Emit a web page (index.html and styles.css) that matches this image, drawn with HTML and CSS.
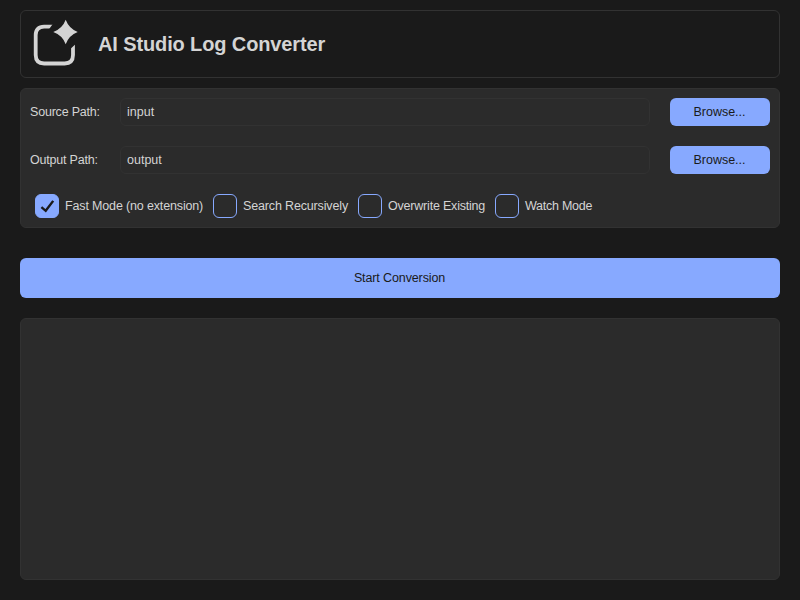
FILE: index.html
```html
<!DOCTYPE html>
<html lang="en">
<head>
<meta charset="utf-8">
<title>AI Studio Log Converter</title>
<link rel="stylesheet" href="styles.css">
</head>
<body>
<main class="app">
  <header class="header">
    <svg class="logo" width="48" height="48" viewBox="0 0 48 48" aria-hidden="true">
      <path class="logo-frame" d="M22 7.7H13.1Q4.7 7.7 4.7 16.1V36.1Q4.7 44.5 13.1 44.5H33.6Q42 44.5 42 36.1V25"/>
      <path class="logo-cut" d="M21.8 5L17.8 10.6H24V5ZM39 30.2L45 24.8V22H39Z"/>
      <path class="logo-star" d="M34.7 0.8Q38 9.7 46.7 13Q38 16.3 34.7 25.2Q31.4 16.3 22.3 13Q31.4 9.7 34.7 0.8Z"/>
    </svg>
    <h1 class="title">AI Studio Log Converter</h1>
  </header>
  <section class="settings">
    <div class="row">
      <label class="label" for="source">Source Path:</label>
      <input class="field" id="source" value="input">
      <button class="button">Browse...</button>
    </div>
    <div class="row">
      <label class="label" for="output">Output Path:</label>
      <input class="field" id="output" value="output">
      <button class="button">Browse...</button>
    </div>
    <div class="options">
      <div class="option option-fast"><span class="box checked"><svg width="22" height="22" viewBox="0 0 22 22"><path class="check" d="M5.4 12.2L9.7 15.8L17.2 5.9"/></svg></span><span>Fast Mode (no extension)</span></div>
      <div class="option option-search"><span class="box"></span><span>Search Recursively</span></div>
      <div class="option option-overwrite"><span class="box"></span><span>Overwrite Existing</span></div>
      <div class="option option-watch"><span class="box"></span><span>Watch Mode</span></div>
    </div>
  </section>
  <button class="button start">Start Conversion</button>
  <section class="log"></section>
</main>
</body>
</html>
```
FILE: styles.css
```css
* { box-sizing: border-box; }
body {
  margin: 0;
  background: #1a1a1a;
  color: #d4d4d4;
  font: 12.5px/16px "Liberation Sans", Arial, sans-serif;
}
.app {
  display: flex;
  flex-direction: column;
  height: 600px;
  padding: 10px 20px 20px;
}
.header {
  display: flex;
  align-items: center;
  height: 68px;
  padding-left: 10px;
  border: 1px solid #323232;
  border-radius: 6px;
}
.logo { flex: none; margin-top: -2px; }
.logo-frame { fill: none; stroke: #d4d4d4; stroke-width: 3.8; }
.logo-cut { fill: #1a1a1a; }
.logo-star { fill: #d4d4d4; }
.title {
  margin: 0 0 0 19px;
  font-size: 20px;
  line-height: 24px;
  letter-spacing: -0.12px;
}
.settings {
  height: 140px;
  margin-top: 10px;
  padding: 9px;
  background: #2b2b2b;
  border: 1px solid #323232;
  border-radius: 6px;
}
.row {
  display: flex;
  align-items: center;
  height: 28px;
  margin-bottom: 20px;
}
.label { width: 90px; letter-spacing: -0.2px; }
.field {
  flex: 1;
  min-width: 0;
  height: 28px;
  margin-right: 20px;
  padding: 0 6px;
  background: #2b2b2b;
  border: 1px solid #323232;
  border-radius: 6px;
  color: inherit;
  font: inherit;
  outline: none;
}
.button {
  width: 100px;
  height: 28px;
  padding: 0 1px 0 0;
  background: #87a9ff;
  border: 0;
  border-radius: 6px;
  color: #1a1a1a;
  font: inherit;
}
.options {
  display: flex;
  height: 24px;
  padding-left: 5px;
}
.option {
  display: flex;
  align-items: center;
  gap: 6px;
  white-space: nowrap;
  letter-spacing: -0.15px;
}
.option-fast { width: 178px; }
.option-search { width: 145px; }
.option-overwrite { width: 137px; letter-spacing: -0.2px; }
.option-watch { letter-spacing: -0.25px; }
.box {
  flex: none;
  width: 24px;
  height: 24px;
  border: 1px solid #87a9ff;
  border-radius: 6px;
}
.box svg { display: block; }
.checked { background: #87a9ff; }
.check { fill: none; stroke: #1a1a1a; stroke-width: 2.4; }
.start {
  flex: none;
  width: 100%;
  height: 40px;
  margin: 30px 0 20px;
  letter-spacing: -0.12px;
}
.log {
  flex: 1;
  background: #2b2b2b;
  border: 1px solid #323232;
  border-radius: 6px;
}
```
